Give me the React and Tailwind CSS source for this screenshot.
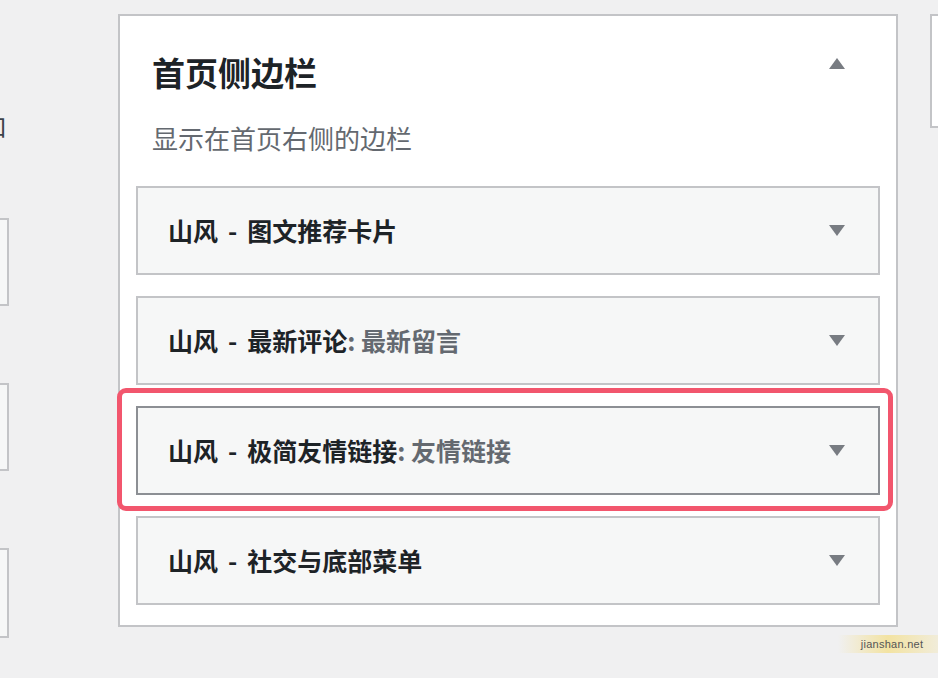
import React from "react";

const widgets = [
  { plugin: "山风", name: "图文推荐卡片" },
  { plugin: "山风", name: "最新评论", title: "最新留言" },
  { plugin: "山风", name: "极简友情链接", title: "友情链接", active: true },
  { plugin: "山风", name: "社交与底部菜单" },
];

const font = { fontFamily: '"Noto Sans CJK SC", "Noto Sans", sans-serif' };

const Caret = ({ up }) => (
  <svg width="16" height="11" viewBox="0 0 16 11" className="shrink-0">
    <path d={up ? "M8 0 L16 11 L0 11 Z" : "M0 0 L16 0 L8 11 Z"} fill="#787c82" />
  </svg>
);

const WidgetRow = ({ widget }) => (
  <div
    className={`relative h-[89px] flex items-center justify-between pl-[30px] pr-[33px] bg-[#f6f7f7] border-2 ${
      widget.active ? "border-[#8c8f94]" : "border-[#c3c4c7]"
    }`}
  >
    <h3 className="text-[25px] font-bold text-[#1d2327] leading-none whitespace-nowrap">
      {widget.plugin}
      <span className="mx-[10px]">-</span>
      {widget.name}
      {widget.title && <span className="text-[#646970]">: {widget.title}</span>}
    </h3>
    <Caret />
    {widget.active && (
      <div className="pointer-events-none absolute -left-[21px] -right-[15px] -top-[20px] -bottom-[18px] border-[5px] border-[#f2566d] rounded-[9px]" />
    )}
  </div>
);

export default function App() {
  return (
    <div className="relative w-[938px] h-[678px] overflow-hidden bg-[#f0f0f1]" style={font}>
      <div className="flex items-start pt-[14px]">
        {/* sidebar list cut off on the left */}
        <div className="w-[10px] shrink-0 flex flex-col">
          <div className="h-[24px] mt-[100px] flex justify-end overflow-hidden">
            <span className="text-[24px] leading-[24px] text-[#3c434a] mr-[3px]">口</span>
          </div>
          <div className="mt-[80px] w-[9px] h-[88px] border-y-2 border-r-2 border-[#c3c4c7] bg-[#f6f7f7]" />
          <div className="mt-[77px] w-[9px] h-[88px] border-y-2 border-r-2 border-[#c3c4c7] bg-[#f6f7f7]" />
          <div className="mt-[77px] w-[9px] h-[90px] border-y-2 border-r-2 border-[#c3c4c7] bg-[#f6f7f7]" />
        </div>

        {/* widget area */}
        <div className="ml-[108px] w-[780px] shrink-0 bg-white border-2 border-[#c3c4c7] px-[16px] pt-[34px] pb-[20px]">
          <div className="flex items-start justify-between pl-[16px] pr-[35px]">
            <div>
              <h2 className="text-[33px] leading-[44px] font-bold text-[#1d2327]">首页侧边栏</h2>
              <p className="mt-[24px] text-[26px] leading-[40px] text-[#646970]">显示在首页右侧的边栏</p>
            </div>
            <div className="mt-[8px]">
              <Caret up />
            </div>
          </div>
          <div className="mt-[28px] flex flex-col gap-[21px]">
            {widgets.map((w) => (
              <WidgetRow key={w.name} widget={w} />
            ))}
          </div>
        </div>

        {/* next widget area, cut off on the right */}
        <div className="ml-[32px] w-[200px] shrink-0 h-[114px] bg-white border-2 border-[#c3c4c7]" />
      </div>

      <div className="absolute right-0 top-[635px] w-[100px] h-[18px] pl-[8px] flex items-center justify-center bg-linear-to-r from-transparent via-[#f3e3a2] to-[#f3e3a2]/30">
        <span className="text-[11px] text-[#555] tracking-wide" style={{ fontFamily: '"Liberation Sans", Arial, sans-serif' }}>
          jianshan.net
        </span>
      </div>
    </div>
  );
}
